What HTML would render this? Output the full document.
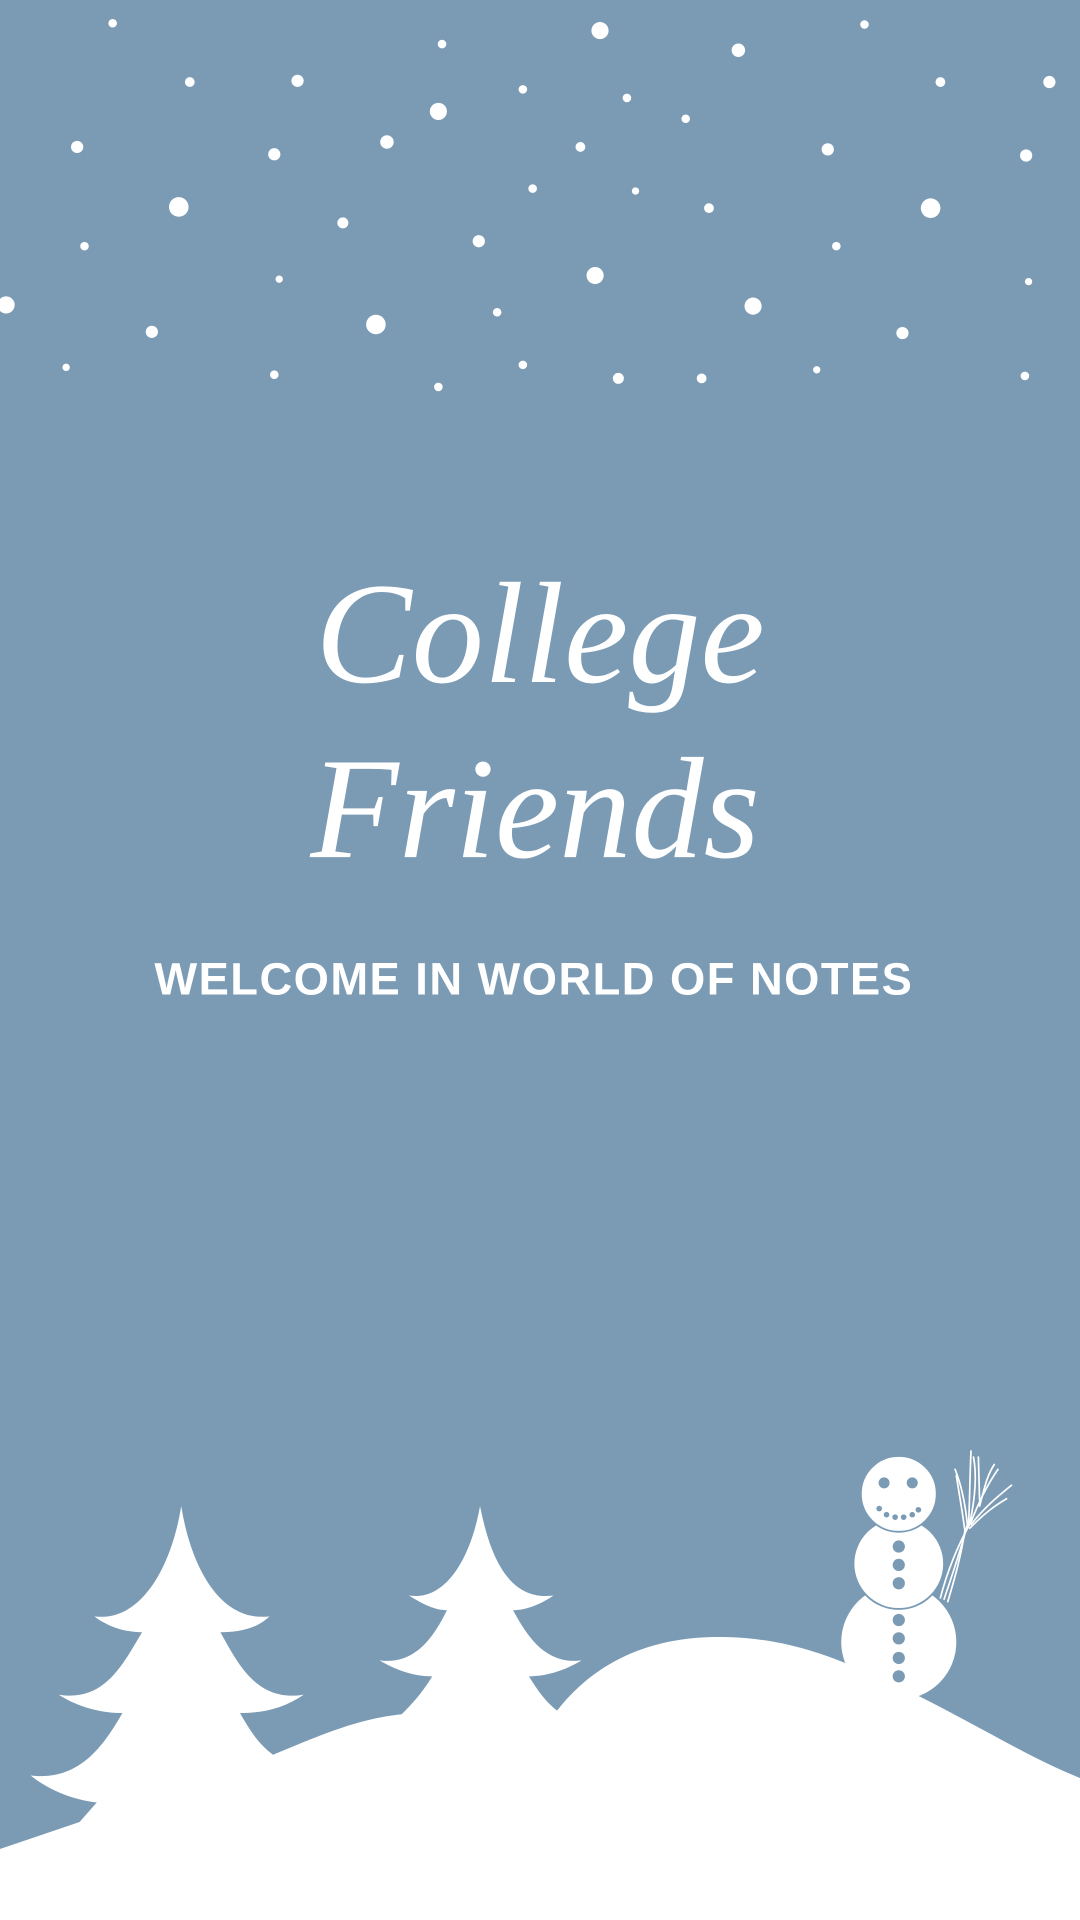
<!DOCTYPE html>
<html><head><meta charset="utf-8"><style>
html,body{margin:0;padding:0;background:#7b9bb5;}
svg{display:block}
</style></head><body>
<svg width="1080" height="1920" viewBox="0 0 882 1568" xmlns="http://www.w3.org/2000/svg">
<rect width="882" height="1568" fill="#7b9bb5"/>
<g fill="#fff">
<circle cx="92" cy="19" r="3.5"/><circle cx="490" cy="25" r="7"/><circle cx="603" cy="41" r="5.5"/><circle cx="706" cy="20" r="3.5"/><circle cx="361" cy="36" r="3.5"/>
<circle cx="155" cy="67" r="4"/><circle cx="243" cy="66" r="5"/><circle cx="427" cy="73" r="3.5"/><circle cx="512" cy="80" r="3.5"/><circle cx="358" cy="91" r="7"/>
<circle cx="560" cy="97" r="3.5"/><circle cx="768" cy="67" r="4"/><circle cx="857" cy="67" r="5"/><circle cx="63" cy="120" r="5"/><circle cx="224" cy="126" r="5"/>
<circle cx="316" cy="116" r="5.5"/><circle cx="474" cy="120" r="4"/><circle cx="676" cy="122" r="5"/><circle cx="838" cy="127" r="5"/><circle cx="146" cy="169" r="8"/>
<circle cx="435" cy="154" r="3.5"/><circle cx="519" cy="156" r="3"/><circle cx="579" cy="170" r="4"/><circle cx="760" cy="170" r="8"/><circle cx="280" cy="182" r="4.5"/>
<circle cx="69" cy="201" r="3.5"/><circle cx="391" cy="197" r="5"/><circle cx="683" cy="201" r="3.5"/><circle cx="5" cy="249" r="7"/><circle cx="228" cy="228" r="3"/>
<circle cx="486" cy="225" r="7"/><circle cx="615" cy="250" r="7"/><circle cx="840" cy="230" r="3"/><circle cx="124" cy="271" r="5"/><circle cx="307" cy="265" r="8"/>
<circle cx="406" cy="255" r="3.5"/><circle cx="737" cy="272" r="5"/><circle cx="54" cy="300" r="3"/><circle cx="224" cy="306" r="3.5"/><circle cx="358" cy="316" r="3.5"/>
<circle cx="427" cy="298" r="3.5"/><circle cx="505" cy="309" r="4.5"/><circle cx="573" cy="309" r="4"/><circle cx="667" cy="302" r="3"/><circle cx="837" cy="307" r="3.5"/>
</g>
<text x="441" y="557" text-anchor="middle" fill="#fff" font-family="Liberation Serif, serif" font-style="italic" font-size="118">College</text>
<text x="437" y="700" text-anchor="middle" fill="#fff" font-family="Liberation Serif, serif" font-style="italic" font-size="118">Friends</text>
<text x="436" y="812" text-anchor="middle" fill="#fff" font-family="Liberation Sans, sans-serif" font-weight="bold" font-size="37" letter-spacing="1.2">WELCOME IN WORLD OF NOTES</text>
<g fill="#fff">
<path d="M0,1510 L65,1488 L79,1472 C60,1470 40,1462 25,1450 C65,1455 85,1425 100,1399 C85,1399 65,1395 48,1384 C85,1390 100,1360 116,1333 C105,1333 90,1330 77,1320 C115,1325 140,1280 148,1230 C156,1280 180,1325 220,1320 C210,1330 195,1333 180,1333 C195,1360 210,1390 248,1384 C232,1395 215,1399 196,1399 C205,1415 212,1425 223,1433 C260,1418 290,1404 328,1400 C338,1390 345,1382 353,1369 C340,1369 325,1365 310,1356 C340,1360 355,1335 365,1315 C355,1315 345,1310 334,1303 C365,1308 385,1270 392,1230 C400,1270 415,1308 452,1303 C442,1310 430,1315 419,1315 C430,1335 445,1360 475,1356 C460,1365 445,1369 432,1369 C440,1382 446,1390 455,1397 C490,1352 540,1335 595,1337 C630,1338 660,1346 690,1358 L750,1385 C800,1410 840,1435 882,1452 L882,1568 L0,1568 Z"/>
<circle cx="734" cy="1341" r="47"/>
<circle cx="734" cy="1277" r="37" stroke="#7b9bb5" stroke-width="1.5"/>
<circle cx="734" cy="1220" r="31" stroke="#7b9bb5" stroke-width="1.5"/>
</g>
<g fill="#7b9bb5">
<circle cx="722" cy="1211" r="4.5"/><circle cx="745" cy="1211" r="4.5"/>
<circle cx="718" cy="1232" r="2.3"/><circle cx="724" cy="1237" r="2.3"/><circle cx="731" cy="1239" r="2.3"/><circle cx="738" cy="1239" r="2.3"/><circle cx="745" cy="1237" r="2.3"/><circle cx="750" cy="1233" r="2.3"/>
<circle cx="734" cy="1263" r="5"/><circle cx="734" cy="1278" r="5"/><circle cx="734" cy="1293" r="5"/>
<circle cx="734" cy="1323" r="5"/><circle cx="734" cy="1338" r="5"/><circle cx="734" cy="1354" r="5"/><circle cx="734" cy="1369" r="5"/>
</g>
<g stroke="#fff" stroke-width="1.4" fill="none" stroke-linecap="round">
<path d="M771,1306 C778,1285 786,1262 790,1245"/><path d="M774,1308 C780,1288 785,1270 788,1250"/><path d="M768,1305 C773,1285 782,1262 793,1243"/>
<path d="M790,1245 C788,1225 784,1210 780,1200"/><path d="M791,1245 C792,1225 792,1205 793,1185"/><path d="M792,1244 C796,1225 798,1205 795,1190"/>
<path d="M793,1243 C800,1225 808,1210 815,1200"/><path d="M793,1245 C805,1230 815,1222 826,1213"/><path d="M792,1248 C805,1235 812,1230 822,1224"/>
<path d="M788,1250 C786,1235 783,1218 781,1205"/><path d="M800,1230 C804,1215 806,1205 812,1196"/><path d="M799,1190 L800,1225"/>
</g>
</svg>
</body></html>
